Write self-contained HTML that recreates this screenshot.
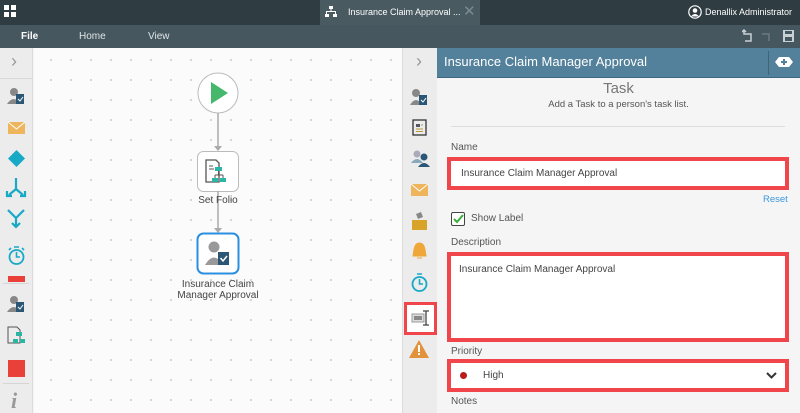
<!DOCTYPE html>
<html><head><meta charset="utf-8"><style>
*{margin:0;padding:0;box-sizing:border-box}
body{width:800px;height:413px;overflow:hidden;font-family:"Liberation Sans",sans-serif;position:relative;background:#f5f5f5}
.a{position:absolute}
.t{position:absolute;white-space:nowrap}
</style></head><body>
<div class="a" style="left:0;top:0;width:800px;height:25px;background:#2f3c42"></div>
<div class="a" style="left:320px;top:0;width:160px;height:25px;background:#4a5a61"></div>
<div class="a" style="left:0;top:25px;width:800px;height:23px;background:#46575f"></div>
<svg class="a" style="left:4px;top:5px" width="12" height="12"><rect x="0" y="0" width="5" height="5" fill="#fff"/><rect x="7" y="0" width="5" height="5" fill="#fff"/><rect x="0" y="7" width="5" height="5" fill="#fff"/><rect x="7" y="7" width="5" height="5" fill="#fff"/></svg>
<svg class="a" style="left:325px;top:6px" width="12" height="12" fill="#fff"><rect x="4" y="0" width="4" height="3"/><rect x="5.5" y="3" width="1" height="3"/><rect x="1" y="5" width="10" height="1"/><rect x="1" y="5" width="1" height="3"/><rect x="10" y="5" width="1" height="3"/><rect x="0" y="8" width="4" height="3"/><rect x="8" y="8" width="4" height="3"/></svg>
<div class="t" style="left:348px;top:7px;font-size:9px;color:#fff">Insurance Claim Approval ...</div>
<div class="t" style="left:463px;top:2px;font-size:15px;color:#7d8b91">✕</div>
<svg class="a" style="left:688px;top:5px" width="14" height="14"><circle cx="7" cy="7" r="6.2" fill="none" stroke="#fff" stroke-width="1.2"/><circle cx="7" cy="5.5" r="2.3" fill="#fff"/><path d="M3 11.5 Q7 6.5 11 11.5" fill="#fff"/></svg>
<div class="t" style="left:705px;top:7px;font-size:9px;color:#fff">Denallix Administrator</div>
<div class="t" style="left:21px;top:31px;font-size:10px;color:#fff;font-weight:bold">File</div>
<div class="t" style="left:79px;top:31px;font-size:10px;color:#dfe5e8">Home</div>
<div class="t" style="left:148px;top:31px;font-size:10px;color:#dfe5e8">View</div>
<svg class="a" style="left:742px;top:29px" width="52" height="14" fill="none" stroke="#c8d0d4" stroke-width="1.5"><path d="M2 2 V5 H9 V12 H3"/><path d="M0 3 L2 1 L4 3"/><path d="M27 12 V5 H20" stroke="#6d7c83"/><rect x="41" y="1" width="11" height="12" fill="#c8d0d4" stroke="none"/><rect x="43" y="2" width="7" height="3" fill="#46575f" stroke="none"/><rect x="43" y="8" width="7" height="4" fill="#46575f" stroke="none"/></svg>

<div class="a" style="left:0;top:48px;width:33px;height:365px;background:#ececec;border-right:1px solid #dcdcdc"></div>
<div class="a" style="left:0;top:78px;width:33px;height:1px;background:#d8d8d8"></div>
<div class="t" style="left:11px;top:51px;font-size:18px;color:#999">›</div>
<svg class="a" style="left:0;top:86px" width="33" height="327">
 <g><circle cx="14" cy="6" r="4" fill="#888"/><path d="M7 18 Q14 8 20 18Z" fill="#888"/><rect x="16" y="8" width="8" height="10" fill="#2b5676"/><path d="M18 13 l2 2 l3 -4" stroke="#fff" fill="none"/></g>
 <rect x="8" y="36" width="17" height="12" fill="#efb55d"/><path d="M8 36 L16.5 43 L25 36" stroke="#fff" fill="none"/>
 <path d="M16.5 64 L25 72.5 L16.5 81 L8 72.5Z" fill="#17a9c6"/>
 <path d="M16 92 V103 M16 103 L9 109 M16 103 L23 109 M7 105 V110 H12 M25 105 V110 H20" stroke="#17a9c6" stroke-width="2.2" fill="none"/>
 <path d="M8 124 L16 132 L24 124 M16 132 V141 M12 137 L16 141 L20 137" stroke="#17a9c6" stroke-width="2.2" fill="none"/>
 <circle cx="16.5" cy="171" r="7" stroke="#17a9c6" stroke-width="1.8" fill="none"/><path d="M16.5 166 V171 H20 M14 161 H19 M9 164 L11 162 M24 164 L22 162" stroke="#17a9c6" stroke-width="1.6" fill="none"/>
 <rect x="8" y="190" width="17" height="6" fill="#e9413a"/>
 <rect x="3" y="197" width="26" height="1" fill="#d5d5d5"/>
 <g transform="translate(0,208)"><circle cx="14" cy="6" r="4" fill="#888"/><path d="M7 18 Q14 8 20 18Z" fill="#888"/><rect x="16" y="8" width="8" height="10" fill="#2b5676"/><path d="M18 13 l2 2 l3 -4" stroke="#fff" fill="none"/></g>
 <g transform="translate(8,241)"><path d="M0 0 H9 L12 3 V16 H0Z" fill="none" stroke="#555"/><rect x="8" y="5" width="6" height="4" fill="#2bb5a5"/><rect x="5" y="12" width="5" height="4" fill="#2bb5a5"/><rect x="12" y="12" width="5" height="4" fill="#2bb5a5"/></g>
 <rect x="8" y="274" width="17" height="17" fill="#e9413a"/>
 <rect x="3" y="297" width="26" height="1" fill="#d5d5d5"/>
 <text x="11" y="322" font-family="Liberation Serif" font-style="italic" font-weight="bold" font-size="22" fill="#999">i</text>
</svg>

<div class="a" style="left:34px;top:48px;width:368px;height:365px;background-color:#fbfbfb;background-image:radial-gradient(#c9c9c9 0.8px,transparent 1px);background-size:20px 20px;background-position:7px 2px"></div>
<svg class="a" style="left:150px;top:60px" width="140" height="250">
 <circle cx="68" cy="33" r="20" fill="#fff" stroke="#bbb"/>
 <path d="M61 22 L78 33 L61 44Z" fill="#45b86b"/>
 <path d="M68 53 V89" stroke="#aaa" stroke-width="1.5"/><path d="M64 86 L68 91 L72 86Z" fill="#aaa"/>
 <rect x="47.5" y="91.5" width="41" height="40" rx="6" fill="#fff" stroke="#bbb"/>
 <g transform="translate(56,100)"><path d="M0 0 H10 L13 3 V22 H0Z" fill="none" stroke="#555" stroke-width="1.3"/><path d="M3 6 H7 M3 9 H8" stroke="#555"/><rect x="9" y="7" width="7" height="4" fill="#2bb5a5"/><rect x="6" y="18" width="6" height="4" fill="#2bb5a5"/><rect x="14" y="18" width="6" height="4" fill="#2bb5a5"/><path d="M12.5 11 V15 M9 15 H17 M9 15 V18 M17 15 V18" stroke="#555"/></g>
 <path d="M68 131 V171" stroke="#aaa" stroke-width="1.5"/><path d="M64 168 L68 173 L72 168Z" fill="#aaa"/>
 <rect x="47.5" y="173.5" width="41" height="40" rx="6" fill="#fff" stroke="#2b8fe0" stroke-width="2"/>
 <circle cx="64" cy="187" r="5.5" fill="#999"/><path d="M55 205 Q64 190 73 205Z" fill="#999"/>
 <rect x="68" y="192" width="11" height="13" fill="#2b5676"/><path d="M70.5 198 l2.5 3 l4 -5" stroke="#fff" stroke-width="1.5" fill="none"/>
</svg>
<div class="t" style="left:168px;top:195px;width:100px;text-align:center;font-size:10px;color:#444">Set Folio</div>
<div class="t" style="left:168px;top:279px;width:100px;text-align:center;font-size:10px;color:#444;line-height:11px">Insurance Claim<br>Manager Approval</div>

<div class="a" style="left:402px;top:48px;width:35px;height:365px;background:#ececec;border-left:1px solid #dcdcdc"></div>
<div class="t" style="left:416px;top:51px;font-size:18px;color:#999">›</div>
<svg class="a" style="left:402px;top:80px" width="35" height="333">
 <g transform="translate(9,8)"><circle cx="5" cy="5" r="4" fill="#888"/><path d="M-1 17 Q5 7 11 17Z" fill="#888"/><rect x="8" y="7" width="8" height="10" fill="#2b5676"/><path d="M10 12 l2 2 l3 -4" stroke="#fff" fill="none"/></g>
 <g transform="translate(11,40)"><rect x="0" y="0" width="13" height="15" fill="none" stroke="#333" stroke-width="1.3"/><rect x="3" y="4" width="4" height="3" fill="#556"/><path d="M3 9 H10 M3 11.5 H10 M8 5 H10" stroke="#b89a3a"/></g>
 <g transform="translate(9,70)"><circle cx="6" cy="4" r="3.5" fill="#aab"/><path d="M0 13 Q6 5 12 13Z" fill="#8ab"/><circle cx="13" cy="7" r="3.5" fill="#2b5676"/><path d="M7 17 Q13 9 19 17Z" fill="#2b5676"/></g>
 <rect x="9" y="104" width="17" height="12" fill="#efb55d"/><path d="M9 104 L17.5 111 L26 104" stroke="#fff" fill="none"/>
 <g transform="translate(10,132)"><rect x="0" y="8" width="15" height="10" fill="#d7a429"/><path d="M4 2 L9 0 L11 5 L6 7Z" fill="#888"/></g>
 <path d="M17.5 163 C12 163 12 170 11 176 H24 C23 170 23 163 17.5 163Z M15 178 H20" fill="#efa73a" stroke="#efa73a"/>
 <circle cx="17.5" cy="204" r="7" stroke="#17a9c6" stroke-width="1.8" fill="none"/><path d="M17.5 199 V204 H21 M15 194 H20" stroke="#17a9c6" stroke-width="1.6" fill="none"/>
</svg>
<div class="a" style="left:404px;top:302px;width:33px;height:33px;background:#fff;border:3px solid #f0464b"></div>
<svg class="a" style="left:411px;top:308px" width="20" height="20"><rect x="1" y="6" width="12" height="8" fill="#ddd" stroke="#999"/><rect x="3" y="8" width="8" height="4" fill="#888"/><path d="M15 3 V17 M12 3 H18 M12 17 H18" stroke="#444" stroke-width="1.3"/></svg>
<svg class="a" style="left:409px;top:340px" width="20" height="18"><path d="M10 0 L20 18 H0Z" fill="#e4913c"/><rect x="9" y="5" width="2" height="7" fill="#fff"/><rect x="9" y="13" width="2" height="2" fill="#fff"/></svg>

<div class="a" style="left:437px;top:48px;width:363px;height:30px;background:#53809a;border-bottom:1px solid #3e6880"></div>
<div class="t" style="left:444px;top:54px;font-size:13px;color:#fff">Insurance Claim Manager Approval</div>
<div class="a" style="left:768px;top:51px;width:1px;height:24px;background:#3e6478"></div>
<svg class="a" style="left:775px;top:56px" width="18" height="12"><path d="M4 1 H14 L18 6 L14 11 H4 L0 6Z" fill="#fff"/><path d="M9 3 V9 M6 6 H12" stroke="#53809a" stroke-width="2"/></svg>
<div class="t" style="left:437px;top:80px;width:363px;text-align:center;font-size:15px;color:#777">Task</div>
<div class="t" style="left:437px;top:99px;width:363px;text-align:center;font-size:9.5px;color:#555">Add a Task to a person's task list.</div>
<div class="a" style="left:451px;top:126px;width:334px;height:1px;background:#ddd"></div>

<div class="t" style="left:451px;top:142px;font-size:10px;color:#555">Name</div>
<div class="a" style="left:447px;top:157px;width:342px;height:33px;background:#fff;border:4px solid #f0464b"></div>
<div class="t" style="left:461px;top:168px;font-size:10px;color:#444">Insurance Claim Manager Approval</div>
<div class="t" style="left:763px;top:194px;font-size:9.5px;color:#3d97e0">Reset</div>
<div class="a" style="left:451px;top:212px;width:14px;height:14px;border:1.5px solid #444;background:#fff;border-radius:2px"></div>
<svg class="a" style="left:453px;top:214px" width="11" height="10"><path d="M1 5 L4 8 L10 1" stroke="#3cae3c" stroke-width="2" fill="none"/></svg>
<div class="t" style="left:471px;top:213px;font-size:10px;color:#555">Show Label</div>

<div class="t" style="left:451px;top:237px;font-size:10px;color:#555">Description</div>
<div class="a" style="left:447px;top:252px;width:342px;height:90px;background:#fff;border:4px solid #f0464b"></div>
<div class="t" style="left:459px;top:264px;font-size:10px;color:#444">Insurance Claim Manager Approval</div>

<div class="t" style="left:451px;top:346px;font-size:10px;color:#555">Priority</div>
<div class="a" style="left:447px;top:359px;width:342px;height:33px;background:#fff;border:4px solid #f0464b"></div>
<div class="a" style="left:460px;top:372px;width:7px;height:7px;border-radius:50%;background:#b81c1c"></div>
<div class="t" style="left:483px;top:370px;font-size:10px;color:#444">High</div>
<svg class="a" style="left:766px;top:372px" width="11" height="7"><path d="M1 1 L5.5 5.5 L10 1" stroke="#333" stroke-width="2" fill="none"/></svg>
<div class="t" style="left:451px;top:396px;font-size:10px;color:#555">Notes</div>
</body></html>
